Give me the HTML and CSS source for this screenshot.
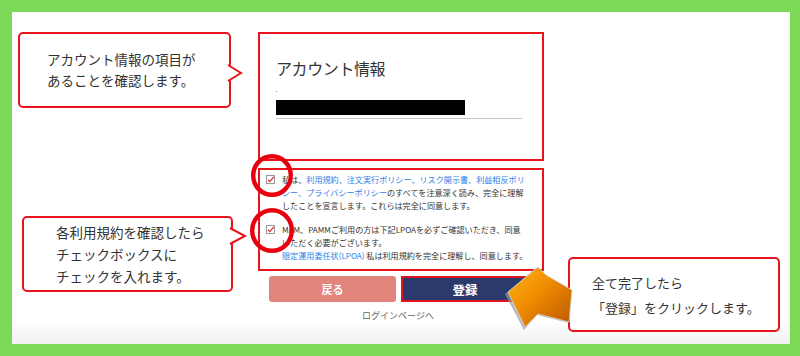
FILE: index.html
```html
<!DOCTYPE html>
<html lang="ja">
<head>
<meta charset="utf-8">
<title>アカウント情報</title>
<link rel="stylesheet" href="styles.css">
</head>
<body>
<div class="panel">
  <div class="col-left">
    <div class="callout callout-1">
      <p>アカウント情報の項目が<br>あることを確認します。</p>
      <svg class="pointer" width="16" height="18" viewBox="0 0 16 18"><polygon points="0,1 14,9 0,17" fill="#fff"/><polyline points="1,1 14,9 1,17" fill="none" stroke="#e8141c" stroke-width="2" stroke-linejoin="miter"/></svg>
    </div>
    <div class="callout callout-2">
      <p>各利用規約を確認したら<br>チェックボックスに<br>チェックを入れます。</p>
      <svg class="pointer" width="18" height="18" viewBox="0 0 18 18"><polygon points="0,1 16,9 0,17" fill="#fff"/><polyline points="1,1 16,9 1,17" fill="none" stroke="#e8141c" stroke-width="2" stroke-linejoin="miter"/></svg>
    </div>
  </div>

  <div class="col-center">
    <section class="account-box">
      <h2>アカウント情報</h2>
      <div class="dot"></div>
      <div class="redacted"></div>
      <div class="underline"></div>
    </section>

    <section class="terms-box">
      <div class="term">
        <svg class="check" width="9" height="9" viewBox="0 0 9 9"><rect x="0.5" y="0.5" width="8" height="8" fill="#fff" stroke="#9a9a9a"/><polyline points="2,4.5 3.8,6.6 7.8,1.8" fill="none" stroke="#e8141c" stroke-width="1.1"/></svg>
        <p>私は、<a>利用規約、注文実行ポリシー、リスク開示書、利益相反ポリ<br>シー、プライバシーポリシー</a>のすべてを注意深く読み、完全に理解<br>したことを宣言します。これらは完全に同意します。</p>
      </div>
      <div class="term term-2">
        <svg class="check" width="9" height="9" viewBox="0 0 9 9"><rect x="0.5" y="0.5" width="8" height="8" fill="#fff" stroke="#9a9a9a"/><polyline points="2,4.5 3.8,6.6 7.8,1.8" fill="none" stroke="#e8141c" stroke-width="1.1"/></svg>
        <p>MAM、PAMMご利用の方は下記LPOAを必ずご確認いただき、同意<br>いただく必要がございます。<br><a>限定運用委任状(LPOA)</a> 私は利用規約を完全に理解し、同意します。</p>
      </div>
    </section>

    <div class="buttons">
      <button class="btn btn-back">戻る</button>
      <button class="btn btn-submit">登録</button>
    </div>
    <div class="login-link">ログインページへ</div>
  </div>

  <div class="col-right">
    <div class="callout callout-3">
      <p>全て完了したら<br>「登録」をクリックします。</p>
    </div>
  </div>

  <svg class="ring ring-1" width="42" height="43" viewBox="0 0 42 43"><ellipse cx="21" cy="21.5" rx="18.8" ry="19.3" fill="none" stroke="#e8000f" stroke-width="4.4"/></svg>
  <svg class="ring ring-2" width="44" height="45" viewBox="0 0 44 45"><ellipse cx="22" cy="22.5" rx="19.8" ry="20.3" fill="none" stroke="#e8000f" stroke-width="4.4"/></svg>

  <svg class="arrow" width="100" height="90" viewBox="0 0 100 90">
    <defs>
      <linearGradient id="ag" x1="0" y1="0" x2="1" y2="1">
        <stop offset="0" stop-color="#ffb31a"/>
        <stop offset="0.45" stop-color="#f08c00"/>
        <stop offset="1" stop-color="#b85600"/>
      </linearGradient>
    </defs>
    <polygon points="15,39 46,13 54,21 82,36 79,68 47,60 34,75" fill="#9a9a9a" opacity="0.7"/>
    <polygon points="18,37 48,12 56,20 82,35 79,67 48,59 35,72" fill="url(#ag)" stroke="#d9d9d9" stroke-width="0.8"/>
  </svg>
</div>
</body>
</html>
```

FILE: styles.css
```css
* { box-sizing: border-box; }

html, body {
  margin: 0;
  padding: 0;
}

body {
  width: 800px;
  height: 356px;
  background: #7dd857;
  font-family: "Noto Sans CJK JP", "Noto Sans", sans-serif;
  color: #333;
  overflow: hidden;
  padding: 12px 0 0 12px;
}

.panel {
  position: relative;
  width: 778px;
  height: 332px;
  background: linear-gradient(to bottom, #ffffff 0, #ffffff 308px, #f1f1f1 332px);
  display: grid;
  grid-template-columns: 246px 286px 1fr;
}

/* callouts */
.callout {
  position: relative;
  background: #fff;
  border: 2px solid #e8141c;
  border-radius: 5px;
  display: flex;
  align-items: center;
}

.callout p {
  margin: 0;
  font-size: 13.5px;
  color: #333;
  white-space: nowrap;
}

.callout .pointer {
  position: absolute;
  left: 100%;
  display: block;
}

.col-left {
  padding-top: 20px;
}

.callout-1 {
  margin-left: 6px;
  width: 213px;
  height: 76px;
  padding-left: 27px;
}
.callout-1 p { line-height: 21px; }
.callout-1 .pointer { top: 30px; margin-left: -2px; }

.callout-2 {
  margin-top: 108px;
  margin-left: 10px;
  width: 211px;
  height: 76px;
  padding-left: 32px;
}
.callout-2 p { line-height: 22px; }
.callout-2 .pointer { top: 9px; margin-left: -2px; }

.col-right {
  padding-top: 245px;
}

.callout-3 {
  margin-left: 24px;
  width: 212px;
  height: 75px;
  padding-left: 22px;
}
.callout-3 p { font-size: 13px; line-height: 25px; }

/* center form */
.col-center {
  padding-top: 20px;
  display: flex;
  flex-direction: column;
}

.account-box {
  height: 129px;
  border: 2px solid #e8141c;
  padding-left: 16px;
}

.account-box h2 {
  margin: 24px 0 0;
  font-size: 16px;
  line-height: 20px;
  font-weight: 400;
  letter-spacing: -0.4px;
  color: #333;
}

.dot {
  width: 1px;
  height: 1px;
  background: #888;
  margin-top: 13px;
}

.redacted {
  width: 189px;
  height: 15px;
  background: #000;
  margin-top: 8px;
}

.underline {
  width: 246px;
  height: 1px;
  background: #c6c6c6;
  margin-top: 3px;
}

.terms-box {
  margin-top: 7px;
  height: 103px;
  border: 2px solid #e8141c;
  padding: 3px 0 7px 6px;
}

.term {
  display: flex;
  align-items: flex-start;
  gap: 7px;
}

.term-2 {
  margin-top: 11px;
}

.check {
  flex: none;
  margin-top: 2px;
  display: block;
}

.term p {
  margin: 0;
  font-size: 8.1px;
  line-height: 13px;
  color: #333;
  white-space: nowrap;
}

.term a {
  color: #2f7fe6;
  text-decoration: none;
}

.buttons {
  display: flex;
  gap: 5px;
  margin-top: 5px;
  padding-left: 11px;
}

.btn {
  height: 26px;
  border: none;
  color: #fff;
  font-family: "Noto Sans CJK JP", sans-serif;
  font-weight: 700;
  padding: 0;
  cursor: pointer;
}

.btn-back {
  width: 127px;
  background: #e2857d;
  border-radius: 3px;
  font-size: 11px;
}

.btn-submit {
  width: 128px;
  background: #2b3a6c;
  border: 2px solid #e0141e;
  font-size: 12.5px;
}

.login-link {
  margin-top: 9px;
  padding-right: 6px;
  text-align: center;
  font-size: 9px;
  line-height: 10px;
  color: #666;
}

/* overlay annotations */
.ring {
  position: absolute;
  display: block;
}
.ring-1 { left: 239px; top: 142px; }
.ring-2 { left: 238px; top: 196px; }

.arrow {
  position: absolute;
  left: 478px;
  top: 243px;
  display: block;
}
```
